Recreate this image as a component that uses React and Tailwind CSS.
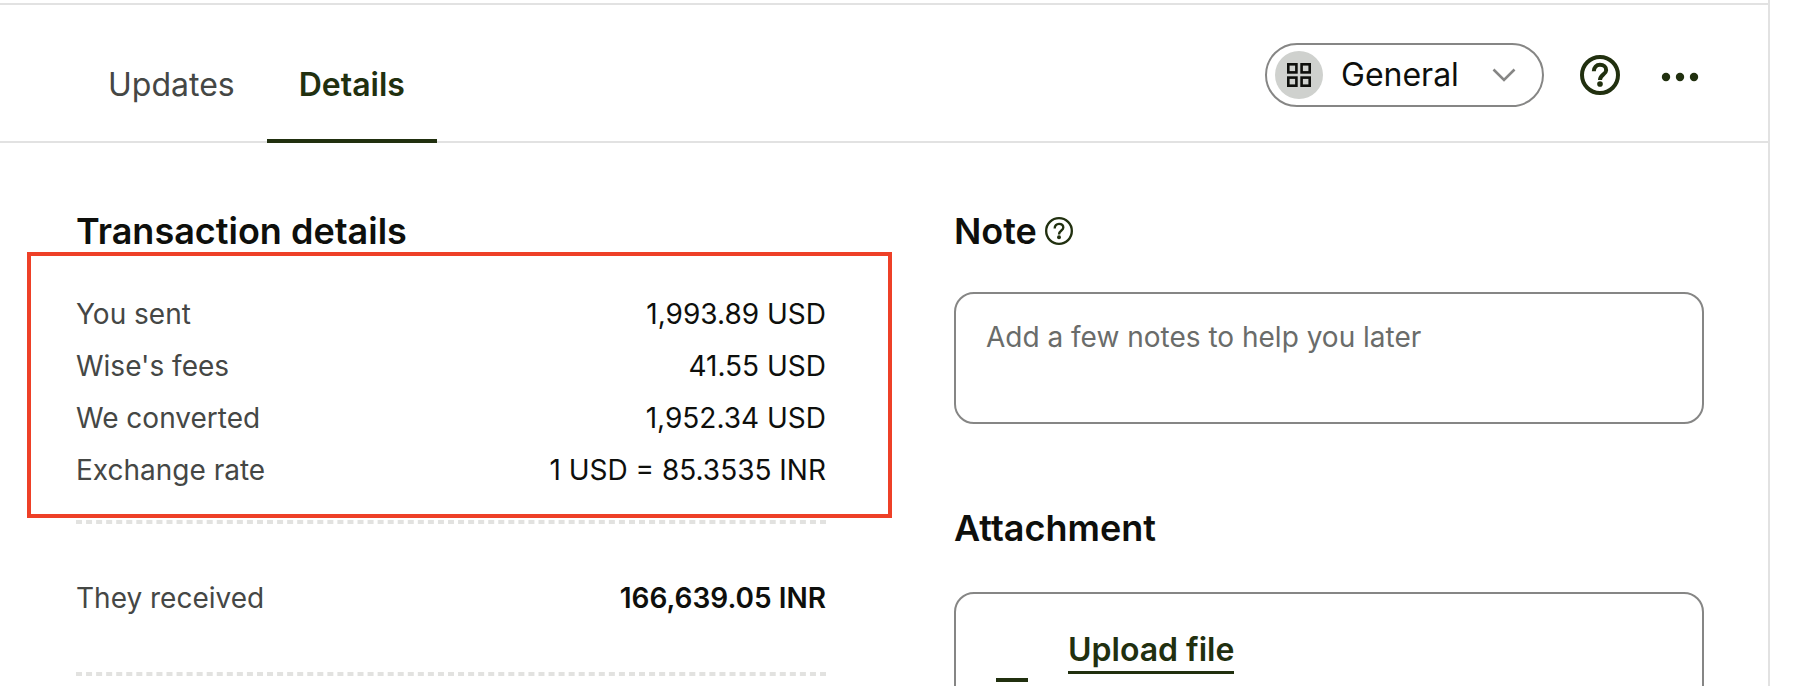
import { useState } from "react";

const rows = [
  { label: "You sent", value: "1,993.89 USD" },
  { label: "Wise's fees", value: "41.55 USD" },
  { label: "We converted", value: "1,952.34 USD" },
  { label: "Exchange rate", value: "1 USD = 85.3535 INR" },
];

const HelpIcon = ({ className, strokeWidth = 2 }) => (
  <svg viewBox="0 0 24 24" fill="none" className={className} aria-hidden="true">
    <circle cx="12" cy="12" r={12 - strokeWidth / 2} stroke="currentColor" strokeWidth={strokeWidth} />
    <path
      d="M8.3 9.8C8.3 7.4 9.8 5.9 12 5.9s3.7 1.3 3.7 3.2c0 2.5-3.7 2.6-3.7 5.9"
      stroke="currentColor"
      strokeWidth={strokeWidth}
    />
    <circle cx="12" cy="17.4" r="1.7" fill="currentColor" />
  </svg>
);

const GridIcon = () => (
  <svg viewBox="0 0 24 24" fill="none" stroke="currentColor" strokeWidth="2.6" className="h-6 w-6" aria-hidden="true">
    <rect x="1.3" y="1.3" width="8.1" height="8.1" />
    <rect x="14.6" y="1.3" width="8.1" height="8.1" />
    <rect x="1.3" y="14.6" width="8.1" height="8.1" />
    <rect x="14.6" y="14.6" width="8.1" height="8.1" />
  </svg>
);

const UploadIcon = () => (
  <svg viewBox="0 0 48 48" fill="none" stroke="currentColor" strokeWidth="4" className="h-12 w-12" aria-hidden="true">
    <path d="M8 6h32M24 44V16M10 30l14-14 14 14" />
  </svg>
);

const Divider = () => <hr className="h-1 border-y-2 border-dashed border-[#e2e2e0]" />;

const Row = ({ label, value, bold }) => (
  <div className="flex justify-between gap-4">
    <dt className="text-[#454745]">{label}</dt>
    <dd className={bold ? "font-semibold" : ""}>{value}</dd>
  </div>
);

const Header = ({ tab, setTab }) => {
  const tabClass = (name) =>
    tab === name
      ? "-mb-0.5 border-b-4 border-[#21300f] px-8 pb-[30px] font-semibold text-[#21300f]"
      : "-mb-0.5 border-b-4 border-transparent px-8 pb-[30px] text-[#454745]";

  return (
    <header className="flex items-start justify-between border-y-2 border-[#e2e2e2] pr-16 pl-[76px]">
      <div role="tablist" className="flex pt-14 text-[32px] leading-12">
        <button role="tab" aria-selected={tab === "updates"} className={tabClass("updates")} onClick={() => setTab("updates")}>
          Updates
        </button>
        <button role="tab" aria-selected={tab === "details"} className={tabClass("details")} onClick={() => setTab("details")}>
          Details
        </button>
      </div>

      <div className="flex items-center gap-9 pt-[38px] text-[#21300f]">
        <label className="flex w-[279px] items-center rounded-full border-2 border-[#868685] py-1.5 pr-[26px] pl-2">
          <span className="flex h-12 w-12 items-center justify-center rounded-full bg-[#cfd1ce] text-[#0e0f0c]">
            <GridIcon />
          </span>
          <select
            aria-label="Category"
            className="ml-[18px] min-w-0 flex-1 appearance-none bg-transparent text-[32px] leading-12 text-[#0e0f0c] outline-none"
          >
            <option>General</option>
          </select>
          <svg viewBox="0 0 24 14" fill="none" stroke="#868685" strokeWidth="2.6" className="h-3.5 w-6" aria-hidden="true">
            <path d="M1.5 1.5 12 12 22.5 1.5" />
          </svg>
        </label>
        <button aria-label="Help">
          <HelpIcon className="h-10 w-10" strokeWidth={2.4} />
        </button>
        <button aria-label="More options">
          <svg viewBox="0 0 48 48" fill="currentColor" className="h-12 w-12" aria-hidden="true">
            <circle cx="10" cy="26" r="4.2" />
            <circle cx="24" cy="26" r="4.2" />
            <circle cx="38" cy="26" r="4.2" />
          </svg>
        </button>
      </div>
    </header>
  );
};

const App = () => {
  const [tab, setTab] = useState("details");
  const [note, setNote] = useState("");

  return (
    <div className="h-screen overflow-hidden bg-white font-[Inter,sans-serif] text-[#0e0f0c]">
      <main className="mr-11 min-h-screen border-r-2 border-[#e2e2e2] pt-[3px]">
        <Header tab={tab} setTab={setTab} />

        <div className="grid grid-cols-2 gap-32 pt-16 pr-16 pl-[76px] text-[28px] leading-11">
          <section>
            <h2 className="text-[36px] leading-12 font-semibold">Transaction details</h2>
            <div className="relative mt-[37px] mb-7">
              <dl className="flex flex-col gap-2">
                {rows.map((row) => (
                  <Row key={row.label} label={row.label} value={row.value} />
                ))}
              </dl>
              {/* highlight around the amounts */}
              <div className="pointer-events-none absolute -top-10 -right-[66px] -bottom-[26px] -left-[49px] border-4 border-[#ee4027]" />
            </div>
            <Divider />
            <dl className="py-13">
              <Row label="They received" value="166,639.05 INR" bold />
            </dl>
            <Divider />
          </section>

          <section>
            <div className="flex items-center gap-2">
              <label htmlFor="note" className="text-[36px] leading-12 font-semibold">
                Note
              </label>
              <button aria-label="About notes" className="text-[#21300f]">
                <HelpIcon className="h-7 w-7" />
              </button>
            </div>
            <textarea
              id="note"
              placeholder="Add a few notes to help you later"
              value={note}
              onChange={(e) => setNote(e.target.value)}
              className="mt-[37px] block h-33 w-full resize-none rounded-[20px] border-2 border-[#868685] px-[30px] py-[21px] outline-none placeholder:text-[#6a6c6a]"
            />

            <h2 className="mt-20 text-[36px] leading-12 font-semibold">Attachment</h2>
            <div className="mt-10 flex gap-8 rounded-[20px] border-2 border-[#868685] px-8 py-[35px] text-[#21300f]">
              <div className="pt-[45px]">
                <UploadIcon />
              </div>
              <div>
                <button className="border-b-3 border-[#21300f] text-[32px] leading-[42px] font-semibold">
                  Upload file
                </button>
              </div>
            </div>
          </section>
        </div>
      </main>
    </div>
  );
};

export default App;
